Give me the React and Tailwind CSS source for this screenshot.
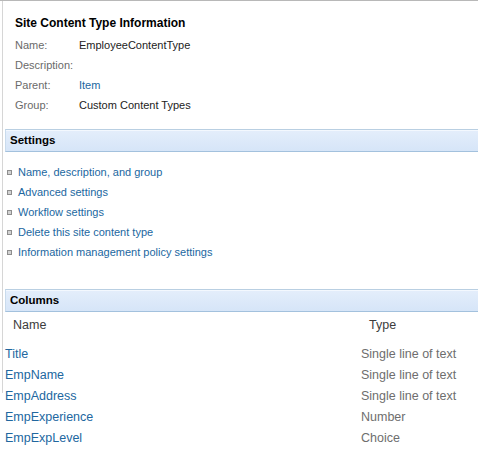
import React from 'react';

const info = [
  { label: 'Name:', value: 'EmployeeContentType' },
  { label: 'Description:', value: '' },
  { label: 'Parent:', value: 'Item', link: true },
  { label: 'Group:', value: 'Custom Content Types' },
];

const settings = [
  'Name, description, and group',
  'Advanced settings',
  'Workflow settings',
  'Delete this site content type',
  'Information management policy settings',
];

const columns = [
  { name: 'Title', type: 'Single line of text' },
  { name: 'EmpName', type: 'Single line of text' },
  { name: 'EmpAddress', type: 'Single line of text' },
  { name: 'EmpExperience', type: 'Number' },
  { name: 'EmpExpLevel', type: 'Choice' },
];

function SectionBar({ title }) {
  return (
    <div className="ml-[2px] h-[23px] flex items-center pl-[4px] border-t border-b border-l border-t-[#b9cfe2] border-b-[#a3c1dd] border-l-[#c9dbec] bg-gradient-to-b from-[#e4eefb] to-[#d6e5f8] shadow-[inset_0_1px_0_#f3f8fe]">
      <span className="text-[11.5px] font-bold text-black">{title}</span>
    </div>
  );
}

function ColumnRow({ col, className = '' }) {
  return (
    <div className={`grid grid-cols-[356px_1fr] h-[21px] items-center pl-[2px] text-[12.5px] ${className}`}>
      <a className="text-[#21679f]">{col.name}</a>
      <span className="text-[#6e6e6e]">{col.type}</span>
    </div>
  );
}

export default function App() {
  return (
    <div
      className="w-[478px] h-[456px] bg-white text-[11px] overflow-hidden border-t border-[#b8b8b8]"
      style={{ fontFamily: '"Liberation Sans", Arial, sans-serif' }}
    >
      <div className="ml-[2px] flex flex-col border-l border-[#d6d6d6]">
        <div className="pt-[12px] pl-[12px] h-[32px] flex items-center">
          <h3 className="text-[12px] font-bold text-black">Site Content Type Information</h3>
        </div>
        <div className="mt-[2px] pl-[12px]">
          {info.map((row) => (
            <div key={row.label} className="grid grid-cols-[64px_1fr] h-[20px] items-center">
              <span className="text-[#6a6a6a]">{row.label}</span>
              <span className={row.link ? 'text-[#21679f]' : 'text-[#222]'}>{row.value}</span>
            </div>
          ))}
        </div>

        <div className="mt-[14px]">
          <SectionBar title="Settings" />
        </div>
        <ul className="mt-[10px]">
          {settings.map((s) => (
            <li key={s} className="h-[20px] flex items-center pl-[4px]">
              <span className="w-[5px] h-[5px] border border-[#8e8e8e] bg-[#d2d2d2] mr-[6px]" />
              <a className="text-[#21679f]">{s}</a>
            </li>
          ))}
        </ul>

        <div className="mt-[27px]">
          <SectionBar title="Columns" />
        </div>
        <div className="mt-[3px] grid grid-cols-[356px_1fr] h-[20px] items-center pl-[10px] text-[12.5px] text-[#3c3c3c]">
          <span>Name</span>
          <span>Type</span>
        </div>
        <div className="mt-[9px]">
          {columns.slice(0, 3).map((c, i) => (
            <ColumnRow key={c.name} col={c} className={i === 2 ? 'mb-[-14px]' : ''} />
          ))}
        </div>
      </div>
      <div className="mt-[14px] ml-[3px]">
        {columns.slice(3).map((c) => (
          <ColumnRow key={c.name} col={c} />
        ))}
      </div>
    </div>
  );
}
